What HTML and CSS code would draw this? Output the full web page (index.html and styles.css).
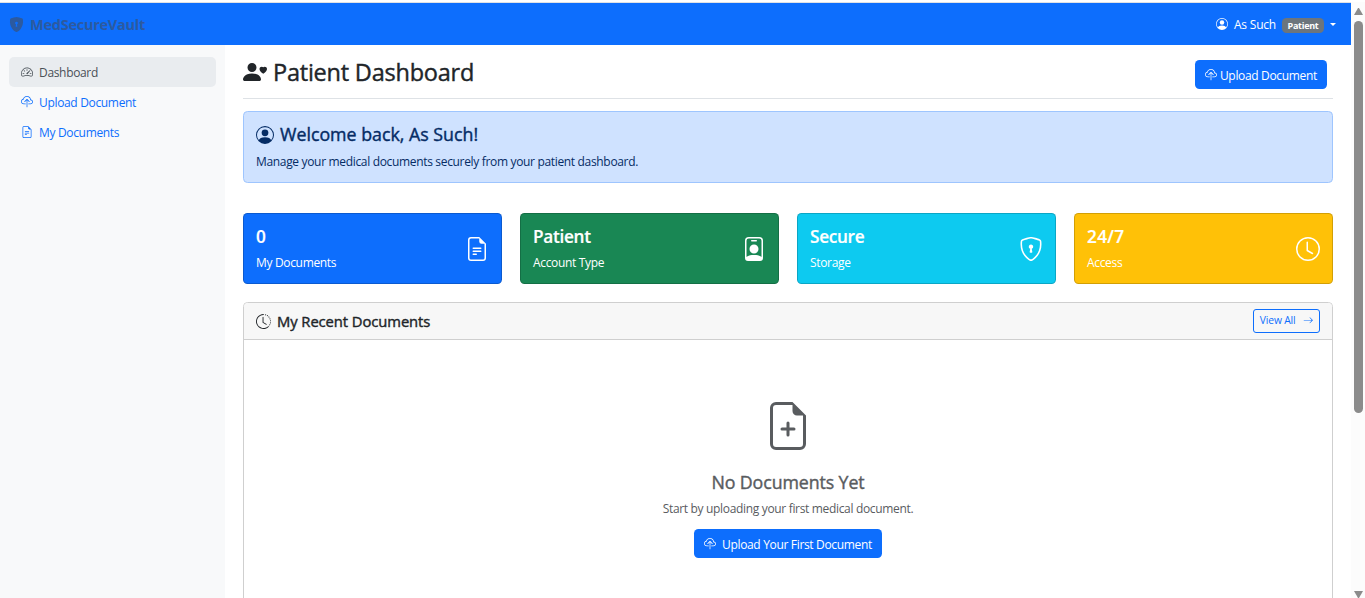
FILE: index.html
```html
<!DOCTYPE html>
<html lang="en">
<head>
<meta charset="utf-8">
<title>MedSecureVault</title>
<link rel="stylesheet" href="styles.css">
</head>
<body>
<svg class="sprite" aria-hidden="true">
  <symbol id="shield-fill" viewBox="0 0 16 16"><path fill-rule="evenodd" d="M8 0c-.69 0-1.843.265-2.928.56-1.11.3-2.229.655-2.887.87a1.54 1.54 0 0 0-1.044 1.262c-.596 4.477.787 7.795 2.465 9.99a11.777 11.777 0 0 0 2.517 2.453c.386.273.744.482 1.048.625.28.132.581.24.829.24s.548-.108.829-.24a7.159 7.159 0 0 0 1.048-.625 11.775 11.775 0 0 0 2.517-2.453c1.678-2.195 3.061-5.513 2.465-9.99a1.541 1.541 0 0 0-1.044-1.263 62.467 62.467 0 0 0-2.887-.87C9.843.266 8.69 0 8 0zm0 5a1.5 1.5 0 0 1 .5 2.915l.385 1.99a.5.5 0 0 1-.491.595h-.788a.5.5 0 0 1-.49-.595l.384-1.99A1.5 1.5 0 0 1 8 5z"/></symbol>
  <symbol id="shield" viewBox="0 0 16 16"><path d="M5.338 1.59a61.44 61.44 0 0 0-2.837.856.481.481 0 0 0-.328.39c-.554 4.157.726 7.19 2.253 9.188a10.725 10.725 0 0 0 2.287 2.233c.346.244.652.42.893.533.12.057.218.095.293.118a.55.55 0 0 0 .101.025.615.615 0 0 0 .1-.025c.076-.023.174-.061.294-.118.24-.113.547-.29.893-.533a10.726 10.726 0 0 0 2.287-2.233c1.527-1.997 2.807-5.031 2.253-9.188a.48.48 0 0 0-.328-.39c-.651-.213-1.75-.56-2.837-.855C9.552 1.29 8.531 1.067 8 1.067c-.53 0-1.552.223-2.662.524zM5.072.56C6.157.265 7.31 0 8 0s1.843.265 2.928.56c1.11.3 2.229.655 2.887.87a1.54 1.54 0 0 1 1.044 1.262c.596 4.477-.787 7.795-2.465 9.99a11.775 11.775 0 0 1-2.517 2.453 7.159 7.159 0 0 1-1.048.625c-.28.132-.581.24-.829.24s-.548-.108-.829-.24a7.158 7.158 0 0 1-1.048-.625 11.777 11.777 0 0 1-2.517-2.453C1.928 10.487.545 7.169 1.141 2.692A1.54 1.54 0 0 1 2.185 1.43 62.456 62.456 0 0 1 5.072.56z"/><path d="M9.5 6.5a1.5 1.5 0 0 1-1 1.415l.385 1.99a.5.5 0 0 1-.491.595h-.788a.5.5 0 0 1-.49-.595l.384-1.99a1.5 1.5 0 1 1 2-1.415z"/></symbol>
  <symbol id="speedometer" viewBox="0 0 16 16"><path d="M8 4a.5.5 0 0 1 .5.5V6a.5.5 0 0 1-1 0V4.5A.5.5 0 0 1 8 4zM3.732 5.732a.5.5 0 0 1 .707 0l.915.914a.5.5 0 1 1-.708.708l-.914-.915a.5.5 0 0 1 0-.707zM2 10a.5.5 0 0 1 .5-.5h1.586a.5.5 0 0 1 0 1H2.5A.5.5 0 0 1 2 10zm9.5 0a.5.5 0 0 1 .5-.5h1.5a.5.5 0 0 1 0 1H12a.5.5 0 0 1-.5-.5zm.754-4.246a.389.389 0 0 0-.527-.02L7.547 9.31a.91.91 0 1 0 1.302 1.258l3.434-4.297a.389.389 0 0 0-.029-.518z"/><path fill-rule="evenodd" d="M0 10a8 8 0 1 1 15.547 2.661c-.442 1.253-1.845 1.602-2.932 1.25C11.309 13.488 9.475 13 8 13c-1.474 0-3.31.488-4.615.911-1.087.352-2.49.003-2.932-1.25A7.988 7.988 0 0 1 0 10zm8-7a7 7 0 0 0-6.603 9.329c.203.575.923.876 1.68.63C4.397 12.533 6.358 12 8 12s3.604.532 4.923.96c.757.245 1.477-.056 1.68-.631A7 7 0 0 0 8 3z"/></symbol>
  <symbol id="cloud" viewBox="0 0 16 16"><path fill-rule="evenodd" d="M4.406 1.342A5.53 5.53 0 0 1 8 0c2.69 0 4.923 2 5.166 4.579C14.758 4.804 16 6.137 16 7.773 16 9.569 14.502 11 12.687 11H10a.5.5 0 0 1 0-1h2.688C13.979 10 15 8.988 15 7.773c0-1.216-1.02-2.228-2.313-2.228h-.5v-.5C12.188 2.825 10.328 1 8 1a4.53 4.53 0 0 0-2.941 1.1c-.757.652-1.153 1.438-1.153 2.055v.448l-.445.049C2.064 4.805 1 5.952 1 7.318 1 8.785 2.23 10 3.781 10H6a.5.5 0 0 1 0 1H3.781C1.708 11 0 9.366 0 7.318c0-1.763 1.266-3.223 2.942-3.593.143-.863.698-1.723 1.464-2.383z"/><path fill-rule="evenodd" d="M7.646 4.146a.5.5 0 0 1 .708 0l3 3a.5.5 0 0 1-.708.708L8.5 5.707V14.5a.5.5 0 0 1-1 0V5.707L5.354 7.854a.5.5 0 1 1-.708-.708l3-3z"/></symbol>
  <symbol id="file-text" viewBox="0 0 16 16"><path d="M5.5 7a.5.5 0 0 0 0 1h5a.5.5 0 0 0 0-1h-5zM5 9.5a.5.5 0 0 1 .5-.5h5a.5.5 0 0 1 0 1h-5a.5.5 0 0 1-.5-.5zm0 2a.5.5 0 0 1 .5-.5h2a.5.5 0 0 1 0 1h-2a.5.5 0 0 1-.5-.5z"/><path d="M9.5 0H4a2 2 0 0 0-2 2v12a2 2 0 0 0 2 2h8a2 2 0 0 0 2-2V4.5L9.5 0zm0 1v2A1.5 1.5 0 0 0 11 4.5h2V14a1 1 0 0 1-1 1H4a1 1 0 0 1-1-1V2a1 1 0 0 1 1-1h5.5z"/></symbol>
  <symbol id="file-plus" viewBox="0 0 16 16"><path d="M8 6.5a.5.5 0 0 1 .5.5v1.5H10a.5.5 0 0 1 0 1H8.5V11a.5.5 0 0 1-1 0V9.5H6a.5.5 0 0 1 0-1h1.5V7a.5.5 0 0 1 .5-.5z"/><path d="M14 4.5V14a2 2 0 0 1-2 2H4a2 2 0 0 1-2-2V2a2 2 0 0 1 2-2h5.5L14 4.5zm-3 0A1.5 1.5 0 0 1 9.5 3V1H4a1 1 0 0 0-1 1v12a1 1 0 0 0 1 1h8a1 1 0 0 0 1-1V4.5h-2z"/></symbol>
  <symbol id="person-circle" viewBox="0 0 16 16"><path d="M11 6a3 3 0 1 1-6 0 3 3 0 0 1 6 0z"/><path fill-rule="evenodd" d="M0 8a8 8 0 1 1 16 0A8 8 0 0 1 0 8zm8-7a7 7 0 0 0-5.468 11.37C3.242 11.226 4.805 10 8 10s4.757 1.225 5.468 2.37A7 7 0 0 0 8 1z"/></symbol>
  <symbol id="person-heart" viewBox="0 0 16 16"><path d="M9 5a3 3 0 1 1-6 0 3 3 0 0 1 6 0Zm-9 8c0 1 1 1 1 1h10s1 0 1-1-1-4-6-4-6 3-6 4Zm13.5-8.09c1.387-1.425 4.855 1.07 0 4.277-4.854-3.207-1.387-5.702 0-4.276Z"/></symbol>
  <symbol id="person-badge" viewBox="0 0 16 16"><path d="M6.5 2a.5.5 0 0 0 0 1h3a.5.5 0 0 0 0-1h-3zM11 8a3 3 0 1 1-6 0 3 3 0 0 1 6 0z"/><path d="M4.5 0A2.5 2.5 0 0 0 2 2.5V14a2 2 0 0 0 2 2h8a2 2 0 0 0 2-2V2.5A2.5 2.5 0 0 0 11.5 0h-7zM3 2.5A1.5 1.5 0 0 1 4.5 1h7A1.5 1.5 0 0 1 13 2.5v10.795a4.2 4.2 0 0 0-.776-.492C11.392 12.387 10.063 12 8 12s-3.392.387-4.224.803a4.2 4.2 0 0 0-.776.492V2.5z"/></symbol>
  <symbol id="clock" viewBox="0 0 16 16"><path d="M8 3.5a.5.5 0 0 0-1 0V9a.5.5 0 0 0 .252.434l3.5 2a.5.5 0 0 0 .496-.868L8 8.71V3.5z"/><path d="M8 16A8 8 0 1 0 8 0a8 8 0 0 0 0 16zm7-8A7 7 0 1 1 1 8a7 7 0 0 1 14 0z"/></symbol>
  <symbol id="clock-history" viewBox="0 0 16 16"><path d="M8.515 1.019A7 7 0 0 0 8 1V0a8 8 0 0 1 .589.022l-.074.997zm2.004.45a7.003 7.003 0 0 0-.985-.299l.219-.976c.383.086.76.2 1.126.342l-.36.933zm1.37.71a7.01 7.01 0 0 0-.439-.27l.493-.87a8.025 8.025 0 0 1 .979.654l-.615.789a6.996 6.996 0 0 0-.418-.302zm1.834 1.79a6.99 6.99 0 0 0-.653-.796l.724-.69c.27.285.52.59.747.91l-.818.576zm.744 1.352a7.08 7.08 0 0 0-.214-.468l.893-.45a7.976 7.976 0 0 1 .45 1.088l-.95.313a7.023 7.023 0 0 0-.179-.483zm.53 2.507a6.991 6.991 0 0 0-.1-1.025l.985-.17c.067.386.106.778.116 1.17l-1 .025zm-.131 1.538c.033-.17.06-.339.081-.51l.993.123a7.957 7.957 0 0 1-.23 1.155l-.964-.267c.046-.165.086-.332.12-.501zm-.952 2.379c.184-.29.346-.594.486-.908l.914.405c-.16.36-.345.706-.555 1.038l-.845-.535zm-.964 1.205c.122-.122.239-.248.35-.378l.758.653a8.073 8.073 0 0 1-.401.432l-.707-.707z"/><path d="M8 1a7 7 0 1 0 4.95 11.95l.707.707A8.001 8.001 0 1 1 8 0v1z"/><path d="M7.5 3a.5.5 0 0 1 .5.5v5.21l3.248 1.856a.5.5 0 0 1-.496.868l-3.5-2A.5.5 0 0 1 7 9V3.5a.5.5 0 0 1 .5-.5z"/></symbol>
  <symbol id="arrow-right" viewBox="0 0 16 16"><path fill-rule="evenodd" d="M1 8a.5.5 0 0 1 .5-.5h11.793l-3.147-3.146a.5.5 0 0 1 .708-.708l4 4a.5.5 0 0 1 0 .708l-4 4a.5.5 0 0 1-.708-.708L13.293 8.5H1.5A.5.5 0 0 1 1 8z"/></symbol>
</svg>
<div class="window">
  <div class="page">
    <header class="navbar">
      <a class="brand"><svg class="icon icon-15"><use href="#shield-fill"/></svg><span class="label">MedSecureVault</span></a>
      <div class="user"><svg class="icon icon-12"><use href="#person-circle"/></svg><span class="user-name">As Such</span><span class="badge">Patient</span><span class="caret"></span></div>
    </header>
    <div class="body">
      <nav class="sidebar">
        <a class="nav-link active"><svg class="icon icon-12"><use href="#speedometer"/></svg><span class="label">Dashboard</span></a>
        <a class="nav-link"><svg class="icon icon-12"><use href="#cloud"/></svg><span class="label">Upload Document</span></a>
        <a class="nav-link"><svg class="icon icon-12"><use href="#file-text"/></svg><span class="label">My Documents</span></a>
      </nav>
      <main class="main">
        <div class="title-row">
          <h1 class="title"><svg class="icon icon-24"><use href="#person-heart"/></svg><span>Patient Dashboard</span></h1>
          <button class="btn"><svg class="icon icon-12"><use href="#cloud"/></svg><span class="label">Upload Document</span></button>
        </div>
        <section class="alert">
          <h4 class="alert-title"><svg class="icon icon-18"><use href="#person-circle"/></svg><span>Welcome back, As Such!</span></h4>
          <p class="alert-text">Manage your medical documents securely from your patient dashboard.</p>
        </section>
        <section class="stats">
          <div class="stat blue"><div><h4 class="stat-value">0</h4><p class="stat-label">My Documents</p></div><svg class="icon icon-24"><use href="#file-text"/></svg></div>
          <div class="stat green"><div><h4 class="stat-value">Patient</h4><p class="stat-label">Account Type</p></div><svg class="icon icon-24"><use href="#person-badge"/></svg></div>
          <div class="stat cyan"><div><h4 class="stat-value">Secure</h4><p class="stat-label">Storage</p></div><svg class="icon icon-24"><use href="#shield"/></svg></div>
          <div class="stat yellow"><div><h4 class="stat-value digits">24/7</h4><p class="stat-label">Access</p></div><svg class="icon icon-24"><use href="#clock"/></svg></div>
        </section>
        <section class="card">
          <div class="card-header">
            <h5 class="card-title"><svg class="icon icon-15"><use href="#clock-history"/></svg><span>My Recent Documents</span></h5>
            <a class="btn-outline"><span>View All</span><svg class="icon icon-10"><use href="#arrow-right"/></svg></a>
          </div>
          <div class="empty">
            <svg class="icon icon-48"><use href="#file-plus"/></svg>
            <h4 class="empty-title">No Documents Yet</h4>
            <p class="empty-text">Start by uploading your first medical document.</p>
            <button class="btn btn-wide"><svg class="icon icon-12"><use href="#cloud"/></svg><span class="label">Upload Your First Document</span></button>
          </div>
        </section>
      </main>
    </div>
  </div>
  <div class="scrollbar"><span class="arrow-up"></span><span class="thumb"></span><span class="arrow-down"></span></div>
</div>
</body>
</html>
```
FILE: styles.css
```css
* { box-sizing: border-box; }
body { margin: 0; font-family: "Open Sans", "Noto Sans", sans-serif; font-size: 12px; line-height: 18px; letter-spacing: -.33px; color: #212529; background: #fff; overflow: hidden; }
h1, h4, h5, p { margin: 0; font-weight: 500; white-space: nowrap; }
h1, h4, h5 { -webkit-text-stroke: .4px currentColor; }
p { font-weight: 400; }
span { white-space: nowrap; }
.sprite { position: absolute; width: 0; height: 0; }
.icon { fill: currentColor; flex: none; display: block; }
.icon-10 { width: 10.5px; height: 10.5px; }
.icon-12 { width: 12px; height: 12px; }
.icon-15 { width: 15px; height: 15px; }
.icon-18 { width: 18px; height: 18px; }
.icon-24 { width: 24px; height: 24px; }
.icon-48 { width: 48px; height: 48px; }
.label { padding-top: 2px; }

.window { display: flex; height: 598px; padding-top: 2px; }
.page { width: 1351px; height: 596px; border-top: 1px solid #dfe1e5; overflow: hidden; }
.navbar { display: flex; align-items: center; justify-content: space-between; height: 42px; padding: 0 15px 0 9px; background: #0d6efd; }
.brand { display: flex; align-items: center; gap: 6px; color: #2c5aa0; font-size: 14.5px; font-weight: 700; letter-spacing: -.25px; }
.user { display: flex; align-items: center; color: #fff; }
.user-name { margin: 0 6px; padding-top: 2px; letter-spacing: -.2px; }
.badge { display: flex; align-items: center; justify-content: center; width: 42px; height: 15px; margin-top: 2px; border-radius: 4.5px; background: #6c757d; font-size: 9px; font-weight: 700; line-height: 15px; letter-spacing: -.3px; }
.caret { margin-left: 6px; border: 3.5px solid transparent; border-top-color: #fff; border-bottom: 0; }

.body { display: flex; }
.sidebar { width: 225px; height: 553px; padding: 12px 9px; background: #f8f9fa; }
.nav-link { display: flex; align-items: center; gap: 6px; height: 30px; padding: 0 12px; border-radius: 5px; color: #0d6efd; }
.nav-link.active { background: #e9ecef; color: #495057; }
.main { flex: 1; padding: 0 18px; }
.title-row { display: flex; align-items: flex-start; justify-content: space-between; height: 54px; padding: 15px 6px 0 0; border-bottom: 1px solid #dee2e6; }
.title { display: flex; align-items: center; gap: 6px; margin-top: -3px; font-size: 23.5px; line-height: 30px; letter-spacing: -.22px; }
.btn { display: flex; align-items: center; gap: 3px; height: 29px; padding: 0 10px; border: 0; border-radius: 4.5px; background: #0d6efd; color: #fff; font: inherit; letter-spacing: inherit; }
.alert { height: 72px; margin-top: 12px; padding: 12px; border: 1px solid #9ec5fe; border-radius: 4.5px; background: #cfe2ff; color: #052c65; }
.alert-title { display: flex; align-items: center; gap: 6px; font-size: 17.8px; line-height: 21px; letter-spacing: 0; }
.alert-text { margin-top: 8px; }
.stats { display: grid; grid-template-columns: repeat(4, 1fr); gap: 18px; margin-top: 30px; }
.stat { display: flex; align-items: center; justify-content: space-between; height: 71px; padding: 0 12px; border: 1px solid rgba(0,0,0,.175); border-radius: 4.5px; color: #fff; }
.blue { background: #0d6efd; }
.green { background: #198754; }
.cyan { background: #0dcaf0; }
.yellow { background: #ffc107; }
.stat-value { font-size: 17.2px; line-height: 21px; font-weight: 600; letter-spacing: -.3px; -webkit-text-stroke: .2px currentColor; }
.stat-value.digits { letter-spacing: .3px; }
.stat-label { margin-top: 7px; }
.card { height: 400px; margin-top: 18px; border: 1px solid #cfcfcf; border-radius: 4.5px; }
.card-header { display: flex; align-items: center; justify-content: space-between; height: 37px; padding: 0 12px; border-bottom: 1px solid #cfcfcf; background: #f7f7f7; border-radius: 4px 4px 0 0; }
.card-title { display: flex; align-items: center; gap: 6px; font-size: 14.8px; letter-spacing: -.08px; }
.btn-outline { display: flex; align-items: center; gap: 7px; height: 24px; padding: 0 6px 2px; border: 1px solid #0d6efd; border-radius: 3px; color: #0d6efd; font-size: 10.3px; letter-spacing: -.15px; }
.empty { display: flex; flex-direction: column; align-items: center; padding-top: 62px; color: #595c5f; }
.empty-title { margin-top: 22px; font-size: 17.8px; line-height: 21px; letter-spacing: -.1px; }
.empty-text { margin-top: 7px; }
.btn-wide { margin-top: 11px; gap: 6px; }

.scrollbar { width: 14px; height: 596px; padding: 6px 0 0 3px; background: #fcfcfc; display: flex; flex-direction: column; }
.arrow-up { border: 4.5px solid transparent; border-bottom: 7px solid #8b8b8b; border-top: 0; width: 9px; }
.thumb { width: 9px; height: 392px; margin-top: 6px; border-radius: 4.5px; background: #8b8b8b; }
.arrow-down { width: 9px; margin-top: 178px; border: 4.5px solid transparent; border-top: 7px solid #8b8b8b; border-bottom: 0; }
```
